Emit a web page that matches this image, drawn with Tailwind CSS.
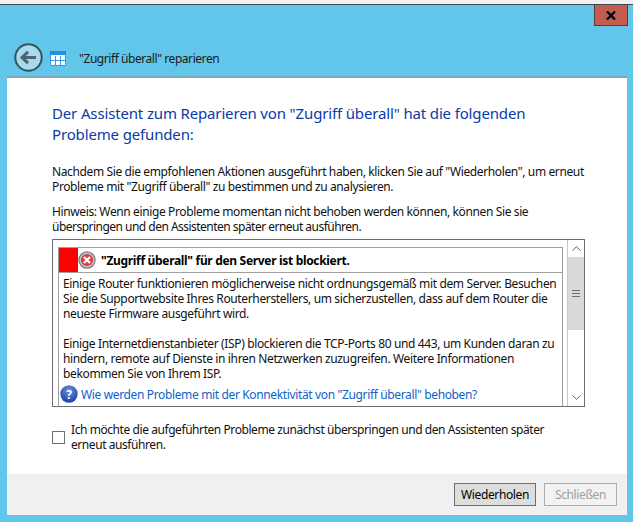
<!DOCTYPE html>
<html lang="de"><head><meta charset="utf-8">
<script src="https://cdn.jsdelivr.net/npm/@tailwindcss/browser@4"></script></head>
<body class="m-0">
<div class="w-[633px] h-[522px] overflow-hidden flex flex-col bg-[#62c6ea] font-['Noto_Sans','Open_Sans',sans-serif] text-[12px] leading-[15px] text-[#111] tracking-[-0.38px]">
  <div class="h-[5px] shrink-0 bg-[#f0f0f0] border-b border-[#3a4a50]"></div>
  <div class="h-[71px] shrink-0 relative flex items-end pl-[14px] pb-[4px]">
    <div class="absolute right-[5px] top-0 w-[34px] h-[21px] bg-[#c35c50] border border-t-0 border-[#5e3a36] flex items-center justify-center">
      <svg width="10" height="9" viewBox="0 0 10 9"><path d="M1 .5 L9 8.5 M9 .5 L1 8.5" stroke="#000" stroke-width="2.2"/></svg>
    </div>
    <svg width="29" height="29" viewBox="0 0 29 29" class="shrink-0">
      <circle cx="14.5" cy="14.5" r="13.2" fill="#a8d9ec" stroke="#33535f" stroke-width="2"/>
      <path d="M22 14.5H8.5M14 8.8 8 14.5 14 20.2" fill="none" stroke="#4a6470" stroke-width="3"/>
    </svg>
    <svg width="16" height="15" viewBox="0 0 16 15" class="shrink-0 ml-[7px] mb-[6px]">
      <rect width="16" height="15" fill="#fff"/><rect x="0" y="0" width="16" height="4" fill="#2490e0"/>
      <path d="M.5 4V14.5H15.5V4M5.5 5V15M10.5 5V15M1 9.5H15" fill="none" stroke="#2f9be8"/>
    </svg>
    <span class="ml-[13px] mb-[6px] text-[#1a1a1a] tracking-[-0.44px]">"Zugriff überall" reparieren</span>
  </div>
  <div class="ml-[7px] mr-[6px] h-[398px] shrink-0 bg-white border-t-2 border-t-[#7fa5b8] pl-[45px] pr-[41px] pt-[25px] flex flex-col">
    <h1 class="text-[15px] leading-[21px] text-[#0a3aa6] font-normal tracking-[-0.15px]">Der Assistent zum Reparieren von "Zugriff überall" hat die folgenden Probleme gefunden:</h1>
    <p class="mt-[19px]">Nachdem Sie die empfohlenen Aktionen ausgeführt haben, klicken Sie auf "Wiederholen", um erneut Probleme mit "Zugriff überall" zu bestimmen und zu analysieren.</p>
    <p class="mt-[10px]">Hinweis: Wenn einige Probleme momentan nicht behoben werden können, können Sie sie <span class="block tracking-[-0.52px]">überspringen und den Assistenten später erneut ausführen.</span></p>
    <div class="mt-[5px] h-[168px] w-[533px] border border-[#6e6e6e] flex shrink-0">
      <div class="flex-1 min-w-0 pl-[5px] pt-[7px] flex flex-col">
        <div class="w-[505px] border-x border-t border-[#a0a0a0] flex-1 flex flex-col relative">
          <div class="h-[25px] flex items-center border-b border-[#a0a0a0] shrink-0">
            <div class="w-[19px] h-[24px] bg-[#ff0000] shrink-0"></div>
            <svg width="18" height="18" viewBox="0 0 18 18" class="shrink-0"><circle cx="9" cy="9" r="8.7" fill="#7d7d7d"/><circle cx="9" cy="9" r="7.5" fill="#c4c4c4"/><circle cx="9" cy="9" r="6.1" fill="#d8404c"/><path d="M6 6 12 12M12 6 6 12" stroke="#fff" stroke-width="2.2"/></svg>
            <strong class="ml-[5px] font-bold text-[#000] tracking-[-0.32px]">"Zugriff überall" für den Server ist blockiert.</strong>
          </div>
          <div class="pl-[4px] pr-[3px] pt-[3px]">
            <p class="tracking-[-0.36px]">Einige Router funktionieren möglicherweise nicht ordnungsgemäß mit dem Server. Besuchen Sie die Supportwebsite Ihres Routerherstellers, um sicherzustellen, dass auf dem Router die neueste Firmware ausgeführt wird.</p>
            <p class="mt-[15px] tracking-[-0.36px]">Einige Internetdienstanbieter (ISP) blockieren die TCP-Ports 80 und 443, um Kunden daran zu hindern, remote auf Dienste in ihren Netzwerken zuzugreifen. Weitere Informationen bekommen Sie von Ihrem ISP.</p>
            <div class="mt-[4px] -ml-[4px] flex items-center">
              <svg width="18" height="18" viewBox="0 0 18 18" class="shrink-0 ml-[1px]"><defs><radialGradient id="q" cx="50%" cy="30%" r="70%"><stop offset="0" stop-color="#6d8fe0"/><stop offset="1" stop-color="#1c3fa8"/></radialGradient></defs><circle cx="9" cy="9" r="8.7" fill="url(#q)"/><text x="9" y="13.5" text-anchor="middle" font-size="12" font-weight="700" fill="#fff" font-family="Noto Sans">?</text></svg>
              <a class="ml-[3px] text-[#0f62c8] tracking-[-0.36px]">Wie werden Probleme mit der Konnektivität von "Zugriff überall" behoben?</a>
            </div>
          </div>
        </div>
      </div>
      <div class="w-[17px] shrink-0 border-l border-[#c8c8c8] flex flex-col">
        <div class="h-[17px] flex items-center justify-center shrink-0"><svg width="9" height="5" viewBox="0 0 9 5"><path d="M.5 4.5 4.5 .7 8.5 4.5" fill="none" stroke="#606060"/></svg></div>
        <div class="h-[73px] bg-[#d9d9d9] shrink-0 flex items-center justify-center"><div class="w-[8px] h-[7px] border-y border-[#707070] flex items-center"><div class="w-full h-px bg-[#707070]"></div></div></div>
        <div class="flex-1"></div>
        <div class="h-[17px] flex items-center justify-center shrink-0"><svg width="9" height="5" viewBox="0 0 9 5"><path d="M.5 .5 4.5 4.3 8.5 .5" fill="none" stroke="#606060"/></svg></div>
      </div>
    </div>
    <label class="mt-[15px] flex items-center">
      <span class="w-[13px] h-[13px] border border-[#707070] bg-white shrink-0"></span>
      <span class="ml-[6px] w-[490px] tracking-[-0.43px]">Ich möchte die aufgeführten Probleme zunächst überspringen und den Assistenten später erneut ausführen.</span>
    </label>
  </div>
  <div class="ml-[7px] mr-[6px] h-[41px] shrink-0 bg-[#f0f0f0] flex items-center justify-end gap-[8px] pr-[10px]">
    <button class="w-[82px] h-[23px] bg-[#dddddd] border border-[#6e6e6e] text-[#000]">Wiederholen</button>
    <button class="w-[73px] h-[23px] bg-[#f2f2f2] border border-[#adadad] text-[#a0a0a0]">Schließen</button>
  </div>
</div>
</body></html>
